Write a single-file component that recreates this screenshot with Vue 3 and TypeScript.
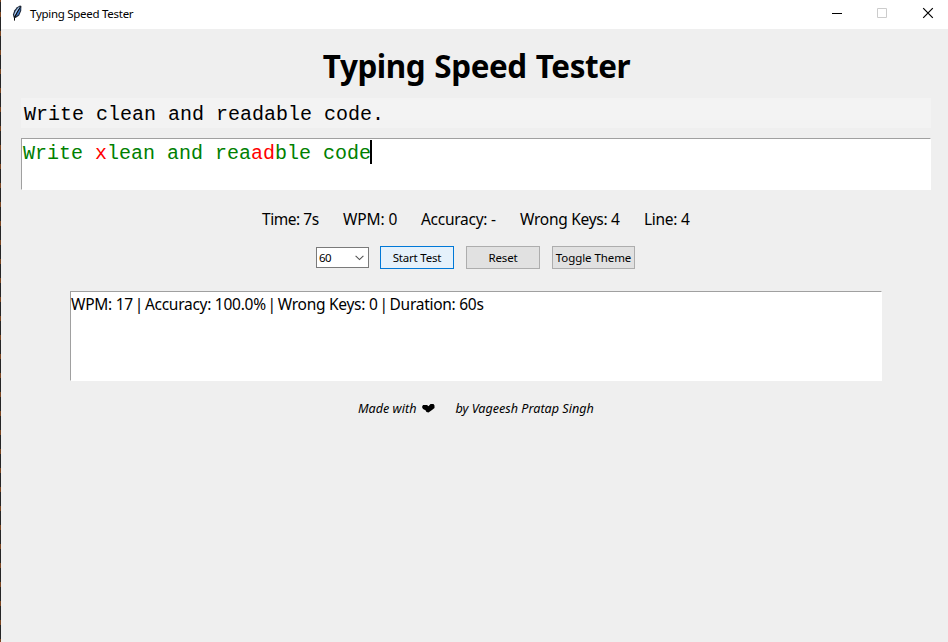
<script setup lang="ts">
import { ref } from 'vue'

interface Segment { text: string; wrong: boolean }

const target = 'Write clean and readable code.'
const typed: Segment[] = [
  { text: 'Write ', wrong: false },
  { text: 'x', wrong: true },
  { text: 'lean and rea', wrong: false },
  { text: 'ad', wrong: true },
  { text: 'ble code', wrong: false },
]
const stats = ['Time: 7s', 'WPM: 0', 'Accuracy: -', 'Wrong Keys: 4', 'Line: 4']
const result = ['WPM: 17', 'Accuracy: 100.0%', 'Wrong Keys: 0', 'Duration: 60s']
const duration = ref(60)
</script>

<template>
  <div class="screen">
    <div class="window">
      <header class="titlebar">
        <svg class="feather" width="12" height="17" viewBox="0 0 12 17">
          <path d="M9 .4 10.4 1 10.2 5.8 8.2 10.4 4.6 13 2.6 12.6 1.9 9.5 3.4 5.3 6 2.2Z" fill="#1b2534" />
          <path d="M8.9 1.6 7 2.8 4.5 6 3.2 9.3 3.5 11.4 6.2 6.8Z" fill="#a5c8f2" />
          <path d="M9.5 2.4 9.2 5.8 7.5 9.4 4.8 11.6 6.6 7.6Z" fill="#3f78c4" />
          <path d="M8.6 3.4 5.8 7.8 3.5 12.4V15.6" fill="none" stroke="#080808" stroke-width="1" />
        </svg>
        <span class="caption">Typing Speed Tester</span>
        <div class="controls">
          <svg width="46" height="29" viewBox="0 0 46 29"><path d="M18 13.5h10" stroke="#000" /></svg>
          <svg width="46" height="29" viewBox="0 0 46 29"><path d="M17.5 8.5h9v9h-9z" fill="none" stroke="#ccc" /></svg>
          <svg width="46" height="29" viewBox="0 0 46 29"><path d="M17.2 8.2l9.6 9.6M26.8 8.2l-9.6 9.6" stroke="#000" stroke-width="1.2" /></svg>
        </div>
      </header>

      <h1>Typing Speed Tester</h1>
      <div class="prompt">{{ target }}</div>
      <div class="entry">
        <span v-for="(s, i) in typed" :key="i" :class="{ wrong: s.wrong }">{{ s.text }}</span><i class="caret" />
      </div>

      <div class="stats">
        <span v-for="s in stats" :key="s">{{ s }}</span>
      </div>

      <div class="actions">
        <div class="combo">
          <span>{{ duration }}</span>
          <svg width="9" height="6" viewBox="0 0 9 6"><path d="M.6 .8 4.5 4.6 8.4 .8" fill="none" stroke="#505050" stroke-width="1.1" /></svg>
        </div>
        <button class="start">Start Test</button>
        <button class="reset">Reset</button>
        <button class="theme">Toggle Theme</button>
      </div>

      <div class="history">
        <template v-for="(r, i) in result" :key="r"><span v-if="i" class="bar">|</span><span>{{ r }}</span></template>
      </div>

      <footer>
        <span>Made with</span>
        <svg width="13" height="9" viewBox="0 0 13 9"><path d="M0 3 1 1H5L6.5 2.2 8.5 0H11.5L12.5 1.5V4L10 6 6.5 8.5 4.5 8 3.5 6.3 1 5Z" fill="#000" /></svg>
        <span class="author">by Vageesh Pratap Singh</span>
      </footer>
    </div>
  </div>
</template>

<style>
body { margin: 0; overflow: hidden; }
</style>

<style scoped>
.screen {
  box-sizing: border-box;
  width: 948px;
  height: 642px;
  padding-left: 1px;
  background: repeating-linear-gradient(#252526 0 8px, #7a4420 8px 13px, #252526 13px 19px);
  background-position: 0 4px;
  color: #000;
  font-family: "Noto Sans", sans-serif;
}
.window { height: 642px; background: #efefef; display: flex; flex-direction: column; }
.titlebar { height: 29px; background: #fff; display: flex; align-items: flex-start; flex: none; }
.feather { margin: 5px 7px 0 10px; }
.caption { font-size: 11.5px; letter-spacing: -.28px; line-height: 27px; white-space: nowrap; }
.controls { display: flex; margin-left: auto; margin-right: -4px; }
.controls svg { display: block; }
h1 {
  margin: 0;
  height: 69px;
  line-height: 73px;
  font-size: 31.4px;
  font-weight: 700;
  letter-spacing: -.42px;
  word-spacing: 1.4px;
  text-align: center;
  padding-left: 4px;
  flex: none;
}
.prompt, .entry { font: 20px "Liberation Mono", monospace; white-space: pre; margin-left: 20px; width: 910px; box-sizing: border-box; flex: none; }
.prompt { height: 30px; line-height: 33px; padding-left: 3px; background: #f3f3f3; }
.entry {
  display: flex;
  margin-top: 10px;
  height: 52px;
  line-height: 29px;
  padding-left: 1px;
  background: #fff;
  border: 1px solid #fff;
  border-top-color: #a0a0a0;
  border-left-color: #a0a0a0;
  color: #008000;
}
.wrong { color: #f00; }
.caret { width: 2px; height: 24px; margin-top: 1px; margin-left: -1px; background: #000; }
.stats {
  display: grid;
  grid-template-columns: 81px 78px 99px 124px 60px;
  margin: 17px 0 0 261px;
  height: 39px;
  line-height: 24px;
  font-size: 15.5px;
  letter-spacing: -.28px;
  white-space: nowrap;
  flex: none;
}
.stats span:nth-child(1) { letter-spacing: -.45px; }
.stats span:nth-child(2) { letter-spacing: -.1px; }
.actions { display: flex; height: 23px; margin-left: 315px; flex: none; font-size: 11.5px; letter-spacing: -.2px; }
.combo {
  box-sizing: border-box;
  width: 53px;
  height: 21px;
  margin: 1px 11px 0 0;
  padding: 0 4px 0 2px;
  border: 1px solid #7a7a7a;
  background: #fff;
  display: flex;
  align-items: center;
  justify-content: space-between;
}
.combo span { letter-spacing: -.5px; }
button {
  box-sizing: border-box;
  height: 23px;
  width: 74px;
  margin: 0 12px 0 0;
  padding: 0 0 1px;
  border: 1px solid #adadad;
  border-radius: 0;
  background: #e1e1e1;
  color: #000;
  font: inherit;
  letter-spacing: inherit;
  white-space: nowrap;
}
.start { border-color: #0078d7; background: #e5f1fb; }
.theme { width: 83px; letter-spacing: -.07px; }
.history {
  box-sizing: border-box;
  margin: 22px 0 0 69px;
  width: 812px;
  height: 90px;
  border: 1px solid #fff;
  border-top-color: #a0a0a0;
  border-left-color: #a0a0a0;
  background: #fff;
  display: flex;
  font-size: 15.5px;
  line-height: 24px;
  letter-spacing: -.27px;
  white-space: pre;
  flex: none;
}
.bar { width: 12px; text-align: center; }
footer {
  display: flex;
  align-items: flex-start;
  height: 24px;
  margin: 16px 0 0 357px;
  font-size: 12.6px;
  font-style: italic;
  line-height: 24px;
  white-space: nowrap;
}
footer svg { margin: 7px 0 0 6px; }
.author { margin-left: 20px; }
</style>
